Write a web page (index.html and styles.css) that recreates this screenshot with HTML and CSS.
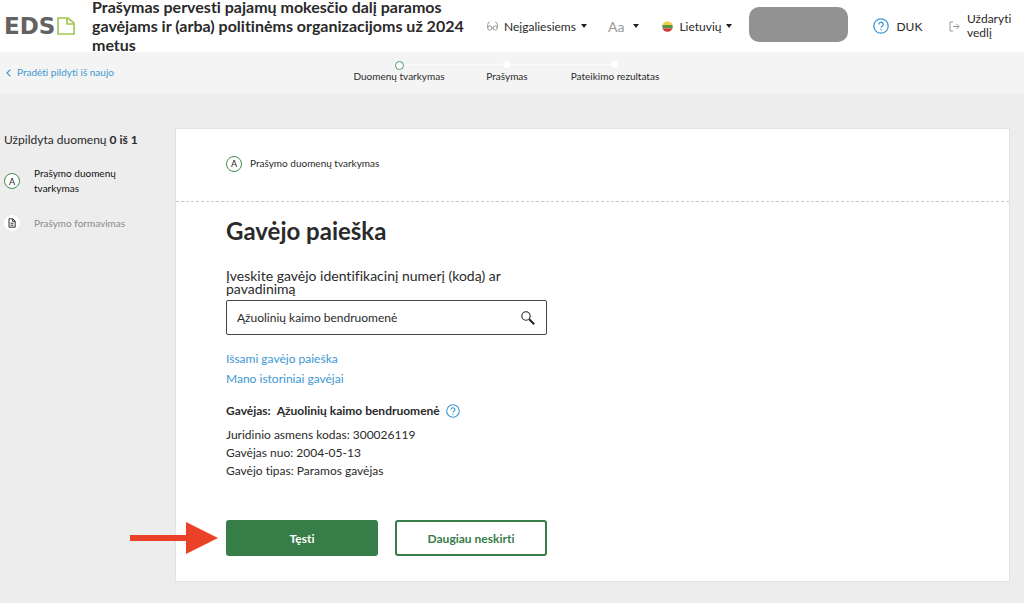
FILE: index.html
```html
<!DOCTYPE html>
<html lang="lt">
<head>
<meta charset="utf-8">
<meta name="viewport" content="width=device-width, initial-scale=1">
<title>EDS – Gavėjo paieška</title>
<link rel="stylesheet" href="styles.css">
</head>
<body>
<header class="header">
  <a class="logo" href="#" aria-label="EDS">
    <span class="logo-text">EDS</span>
    <svg class="logo-page" viewBox="0 0 18 18" width="18" height="18" aria-hidden="true"><path d="M1 1h10l6 5v11H1z M10 1v6h7" fill="none" stroke="#a5c755" stroke-width="1.7"/></svg>
  </a>
  <p class="title">Prašymas pervesti pajamų mokesčio dalį paramos gavėjams ir (arba) politinėms organizacijoms už 2024 metus</p>
  <div class="tools">
    <button class="tool" type="button">
      <svg viewBox="0 0 11 12" width="11" height="12" aria-hidden="true"><g fill="none" stroke="#999" stroke-width="1"><circle cx="2.8" cy="8" r="2.1"/><circle cx="8.2" cy="8" r="2.1"/><path d="M.7 8V4.500Q.7 2.500 2.800 2M10.300 8V4.500Q10.300 2.500 8.200 2M4.800 8h1.400"/></g></svg>
      <span>Neįgaliesiems</span><span class="caret"></span>
    </button>
    <button class="tool" type="button"><span class="muted">Aa</span><span class="caret caret-wide"></span></button>
    <button class="tool" type="button">
      <svg viewBox="0 0 11 11" width="11" height="11" aria-hidden="true"><clipPath id="flag"><circle cx="5.500" cy="5.500" r="5.300"/></clipPath><g clip-path="url(#flag)"><path fill="#f2cf4a" d="M0 0h11v4H0z"/><path fill="#5d9448" d="M0 4h11v3.500H0z"/><path fill="#d13a38" d="M0 7.500h11V11H0z"/></g></svg>
      <span>Lietuvių</span><span class="caret"></span>
    </button>
  </div>
  <div class="user"></div>
  <a class="faq" href="#">
    <svg class="help" viewBox="0 0 16 16" width="16" height="16" aria-hidden="true"><circle cx="8" cy="8" r="7.200"/><path d="M5.800 6.400a2.200 2.100 0 1 1 3.300 1.800Q8 8.800 8 9.700M8 11v1.200"/></svg>
    <span>DUK</span>
  </a>
  <a class="exit" href="#">
    <svg viewBox="0 0 11 11" width="11" height="11" aria-hidden="true"><path d="M4 1H1v9h3M4 5.500h6M7.500 3l2.500 2.500L7.500 8" fill="none" stroke="#999"/></svg>
    <span>Uždaryti vedlį</span>
  </a>
</header>
<nav class="subbar">
  <a class="restart" href="#"><svg viewBox="0 0 5 8" width="5" height="8" aria-hidden="true"><path d="M4.300.7L1 4l3.300 3.300" fill="none" stroke="#3d98d3" stroke-width="1.200"/></svg>Pradėti pildyti iš naujo</a>
  <ol class="steps">
    <li class="step current">Duomenų tvarkymas</li>
    <li class="step">Prašymas</li>
    <li class="step">Pateikimo rezultatas</li>
  </ol>
</nav>
<div class="layout">
  <aside class="sidebar">
    <p class="progress">Užpildyta duomenų <strong>0 iš 1</strong></p>
    <ul class="side-list">
      <li class="side-item"><span class="badge">A</span><a href="#">Prašymo duomenų tvarkymas</a></li>
      <li class="side-item"><span class="badge badge-doc"><svg viewBox="0 0 8 10" width="8" height="10" aria-hidden="true"><path d="M1 .8h3.800L7.200 3v6.200H1z M4.600 1v2.300H7M2.500 5.200h3M2.500 7.200h3" fill="none" stroke="#333"/></svg></span><a class="inactive" href="#">Prašymo formavimas</a></li>
    </ul>
  </aside>
  <main class="card">
    <div class="card-head"><span class="badge">A</span><span>Prašymo duomenų tvarkymas</span></div>
    <form class="card-body">
      <h1 class="heading">Gavėjo paieška</h1>
      <label class="label" for="recipient">Įveskite gavėjo identifikacinį numerį (kodą) ar pavadinimą</label>
      <div class="search">
        <input class="search-input" id="recipient" type="text" value="Ąžuolinių kaimo bendruomenė">
        <button class="search-button" type="button" aria-label="Ieškoti"><svg viewBox="0 0 14 14" width="14" height="14" aria-hidden="true"><g fill="none" stroke="#222"><circle cx="5" cy="5" r="4.200" stroke-width="1.100"/><path d="M8.200 8.200l5 5" stroke-width="2"/></g></svg></button>
      </div>
      <div class="links"><a href="#">Išsami gavėjo paieška</a><a href="#">Mano istoriniai gavėjai</a></div>
      <div class="recipient"><strong>Gavėjas:</strong><strong>Ąžuolinių kaimo bendruomenė</strong>
        <svg class="help" viewBox="0 0 16 16" width="14" height="14" aria-hidden="true"><circle cx="8" cy="8" r="7.200"/><path d="M5.800 6.400a2.200 2.100 0 1 1 3.300 1.800Q8 8.800 8 9.700M8 11v1.200"/></svg>
      </div>
      <div class="details"><p>Juridinio asmens kodas: 300026119</p><p>Gavėjas nuo: 2004-05-13</p><p>Gavėjo tipas: Paramos gavėjas</p></div>
      <div class="actions">
        <button class="button primary" type="button">Tęsti</button>
        <button class="button" type="button">Daugiau neskirti</button>
        <svg class="pointer" viewBox="0 0 88 32" width="88" height="32" aria-hidden="true"><path d="M0 13h56V0l32 16-32 16V19H0z" fill="#eb4127"/></svg>
      </div>
    </form>
  </main>
</div>
</body>
</html>
```
FILE: styles.css
```css
* { box-sizing: border-box; }
body {
  margin: 0;
  min-height: 100vh;
  background: #ededed;
  color: #2a2a2a;
  font: 12px/15px Lato, "Noto Sans", sans-serif;
  font-variant-ligatures: none;
}
p, ol, ul, h1 { margin: 0; padding: 0; }
ol, ul { list-style: none; }
a { color: #3d98d3; text-decoration: none; }
button, input { font: inherit; color: inherit; }
svg { flex: none; display: block; }

.header {
  display: flex;
  align-items: center;
  height: 52px;
  padding: 0 14px 0 4px;
  background: #fff;
}
.logo { display: flex; align-items: center; gap: 2px; width: 88px; }
.logo-text { font: bold 23px/24px "DejaVu Sans", sans-serif; color: #626262; }
.title { flex: 1; max-width: 388px; padding-bottom: 2px; font-size: 16px; line-height: 19px; font-weight: bold; }
.tools { display: flex; gap: 21px; margin-left: 7px; }
.tool {
  display: flex;
  align-items: center;
  gap: 5px;
  padding: 0;
  border: 0;
  background: none;
}
.tool svg { margin-right: 1px; }
.muted { color: #999; font-size: 14px; }
.caret {
  border: 3px solid transparent;
  border-top: 4px solid #222;
  border-bottom: 0;
}
.caret-wide { margin: 0 2px 0 4px; }
.user { width: 99px; height: 35px; margin: 0 0 4px 17px; border-radius: 10px; background: #929292; }
.faq, .exit { display: flex; align-items: center; gap: 7px; color: #2a2a2a; }
.faq { margin-left: 25px; }
.exit { width: 61px; margin-left: auto; line-height: 14px; }
.help { fill: none; stroke: #3d98d3; stroke-width: 1.3; }

.subbar {
  display: grid;
  grid-template-columns: 1fr auto 1fr;
  align-items: center;
  height: 41px;
  padding: 0 14px 0 4px;
  background: #f4f4f4;
  font-size: 10px;
}
.restart { display: flex; align-items: center; gap: 6px; padding-left: 2px; }
.steps { display: grid; grid-template-columns: repeat(3, 108px); }
.step {
  position: relative;
  padding-top: 8px;
  color: #2a2a2a;
  text-align: center;
  white-space: nowrap;
}
.step::before {
  content: "";
  display: block;
  position: absolute;
  top: 0;
  left: 50%;
  z-index: 1;
  width: 7px;
  height: 7px;
  margin-left: -4px;
  border-radius: 50%;
  background: #fff;
}
.step + .step::after {
  content: "";
  position: absolute;
  top: 3px;
  right: 50%;
  width: 100%;
  height: 1px;
  background: #fafafa;
}
.step.current::before { border: 1px solid #4d9c64; }

.layout { display: flex; align-items: flex-start; padding: 35px 14px 20px 4px; }
.sidebar { flex: none; width: 171px; padding-top: 4px; }
.side-list { padding-top: 19px; font-size: 10px; }
.side-item { display: flex; align-items: center; gap: 14px; padding-bottom: 19px; }
.side-item a { width: 100px; color: #111; }
.side-item .inactive { color: #8b8b8b; }
.badge {
  display: flex;
  flex: none;
  align-items: center;
  justify-content: center;
  width: 16px;
  height: 16px;
  border: 1px solid #3f8f56;
  border-radius: 50%;
  background: #fff;
  font-size: 9px;
  color: #222;
}
.badge-doc { border-color: #fff; }

.card { flex: 1; border: 1px solid #e3e3e3; background: #fff; }
.card-head {
  display: flex;
  align-items: center;
  gap: 8px;
  height: 73px;
  padding: 0 50px 3px;
  border-bottom: 1px dashed #ccc;
  font-size: 10px;
}
.card-body { padding: 13px 50px 25px; }
.heading { font-size: 24px; line-height: 32px; }
.label { display: block; max-width: 300px; margin-top: 22px; font-size: 14px; line-height: 13px; }
.search { display: flex; width: 321px; height: 35px; margin-top: 5px; border: 1px solid #444; border-radius: 2px; }
.search-input { flex: 1; min-width: 0; padding: 0 10px; border: 0; outline: 0; background: none; }
.search-button { width: 37px; padding: 0 12px; border: 0; background: none; }
.links { display: flex; flex-direction: column; align-items: flex-start; gap: 5px; margin-top: 16px; }
.recipient { display: flex; align-items: center; gap: 6px; margin-top: 17px; }
.details { margin-top: 8px; line-height: 18px; }
.actions { position: relative; display: flex; gap: 17px; margin-top: 40px; }
.button {
  width: 152px;
  height: 36px;
  border: 2px solid #377d47;
  border-radius: 3px;
  background: #fff;
  color: #377d47;
  font-weight: bold;
}
.primary { background: #377d47; color: #fff; }
.pointer { position: absolute; top: 2px; left: -96px; }
```
